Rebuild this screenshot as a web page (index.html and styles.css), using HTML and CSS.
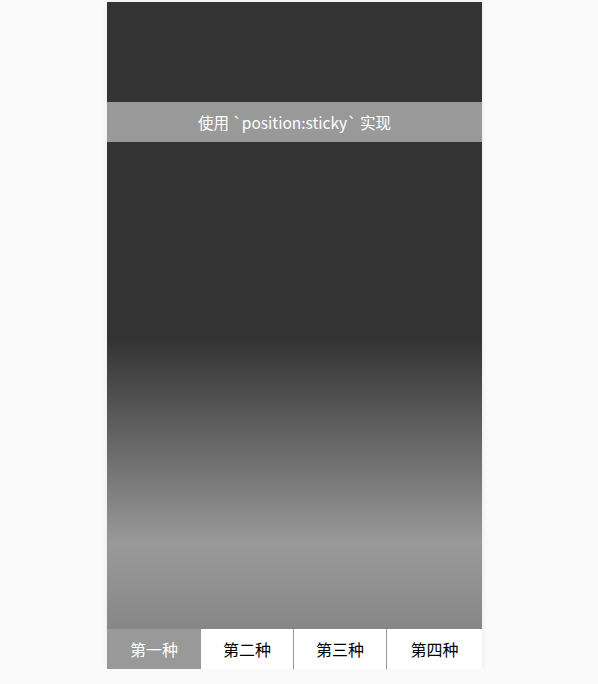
FILE: index.html
```html
<!DOCTYPE html>
<html lang="zh-CN">
<head>
<meta charset="utf-8">
<title>sticky</title>
<link rel="stylesheet" href="styles.css">
</head>
<body>
<div class="phone">
  <div class="scroller">
    <div class="top"></div>
    <div class="sticky">使用 `position:sticky` 实现</div>
    <div class="content"></div>
  </div>
  <nav class="tabs">
    <div class="tab active">第一种</div>
    <div class="tab">第二种</div>
    <div class="tab">第三种</div>
    <div class="tab">第四种</div>
  </nav>
</div>
</body>
</html>
```

FILE: styles.css
```css
html, body {
  margin: 0;
  padding: 0;
  background: #fafafa;
  font-family: "Noto Sans CJK SC", "Microsoft YaHei", sans-serif;
}
body {
  padding: 2px 0 0 107px;
}
.phone {
  width: 375px;
  height: 667px;
  display: flex;
  flex-direction: column;
  box-shadow: 0 0 6px rgba(0, 0, 0, 0.08);
  background: #333;
}
.scroller {
  flex: 1;
  display: flex;
  flex-direction: column;
  overflow: hidden;
}
.top {
  height: 100px;
  background: #333;
  flex: none;
}
.sticky {
  height: 40px;
  flex: none;
  background: #999;
  color: #fff;
  font-size: 15.5px;
  display: flex;
  align-items: center;
  justify-content: center;
}
.content {
  flex: 1;
  background: linear-gradient(to bottom, #333 0px, #333 198px, #999 401px, #878787 487px);
}
.tabs {
  height: 40px;
  flex: none;
  display: grid;
  grid-template-columns: 94px 93px 93px 1fr;
  background: #fff;
}
.tab {
  display: flex;
  align-items: center;
  justify-content: center;
  font-size: 16px;
  color: #000;
}
.tab:nth-child(2),
.tab:nth-child(3) {
  border-right: 1px solid #999;
}
.tab.active {
  background: #999;
  color: #fff;
}
```
